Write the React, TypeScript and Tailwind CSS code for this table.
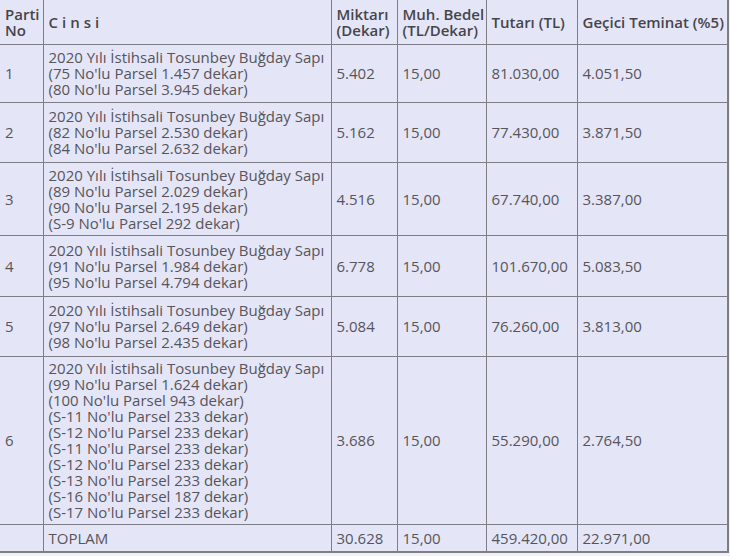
import React from 'react';

interface Row {
  no: string;
  lines: string[];
  miktar: string;
  bedel: string;
  tutar: string;
  teminat: string;
  h: string;
}

const head = '2020 Yılı İstihsali Tosunbey Buğday Sapı';

const rows: Row[] = [
  { no: '1', h: 'h-[58px]', lines: [head, "(75 No'lu Parsel 1.457 dekar)", "(80 No'lu Parsel 3.945 dekar)"], miktar: '5.402', bedel: '15,00', tutar: '81.030,00', teminat: '4.051,50' },
  { no: '2', h: 'h-[60px]', lines: [head, "(82 No'lu Parsel 2.530 dekar)", "(84 No'lu Parsel 2.632 dekar)"], miktar: '5.162', bedel: '15,00', tutar: '77.430,00', teminat: '3.871,50' },
  { no: '3', h: 'h-[73px]', lines: [head, "(89 No'lu Parsel 2.029 dekar)", "(90 No'lu Parsel 2.195 dekar)", "(S-9 No'lu Parsel 292 dekar)"], miktar: '4.516', bedel: '15,00', tutar: '67.740,00', teminat: '3.387,00' },
  { no: '4', h: 'h-[61px]', lines: [head, "(91 No'lu Parsel 1.984 dekar)", "(95 No'lu Parsel 4.794 dekar)"], miktar: '6.778', bedel: '15,00', tutar: '101.670,00', teminat: '5.083,50' },
  { no: '5', h: 'h-[60px]', lines: [head, "(97 No'lu Parsel 2.649 dekar)", "(98 No'lu Parsel 2.435 dekar)"], miktar: '5.084', bedel: '15,00', tutar: '76.260,00', teminat: '3.813,00' },
  {
    no: '6',
    h: 'h-[168px]',
    lines: [
      head,
      "(99 No'lu Parsel 1.624 dekar)",
      "(100 No'lu Parsel 943 dekar)",
      "(S-11 No'lu Parsel 233 dekar)",
      "(S-12 No'lu Parsel 233 dekar)",
      "(S-11 No'lu Parsel 233 dekar)",
      "(S-12 No'lu Parsel 233 dekar)",
      "(S-13 No'lu Parsel 233 dekar)",
      "(S-16 No'lu Parsel 187 dekar)",
      "(S-17 No'lu Parsel 233 dekar)",
    ],
    miktar: '3.686', bedel: '15,00', tutar: '55.290,00', teminat: '2.764,50',
  },
];

const td = 'border border-[#7d7d86] px-[5px] py-[3px] align-middle';
const th = 'border border-[#7d7d86] px-[5px] py-[5px] align-middle text-left font-semibold text-[#454549] text-[15px]';

export default function App() {
  return (
    <div className="min-h-[556px] w-[730px] bg-[#f1f1f3] font-['Open_Sans','Liberation_Sans',sans-serif] text-[15px] leading-[16px] text-[#55555a]">
      <table className="w-[729px] border-collapse bg-[#e5e5f8] border-t-0 border-l-0 border-r-2 border-b-2 border-[#7d7d86] table-fixed">
        <colgroup>
          <col className="w-[43px]" />
          <col className="w-[288px]" />
          <col className="w-[66px]" />
          <col className="w-[89px]" />
          <col className="w-[91px]" />
          <col />
        </colgroup>
        <thead>
          <tr className="h-[44px]">
            <th className={`${th} border-l-0 border-t-0`}>Parti<br />No</th>
            <th className={`${th} border-t-0 tracking-[4px]`}>Cinsi</th>
            <th className={`${th} border-t-0 whitespace-nowrap`}>Miktarı<br />(Dekar)</th>
            <th className={`${th} border-t-0 whitespace-nowrap`}>Muh. Bedel<br />(TL/Dekar)</th>
            <th className={`${th} border-t-0 whitespace-nowrap`}>Tutarı (TL)</th>
            <th className={`${th} border-t-0 border-r-0 whitespace-nowrap`}>Geçici Teminat (%5)</th>
          </tr>
        </thead>
        <tbody>
          {rows.map((r) => (
            <tr key={r.no} className={r.h}>
              <td className={`${td} border-l-0`}>{r.no}</td>
              <td className={td}>
                {r.lines.map((l, i) => (
                  <div key={i} className="whitespace-nowrap">{l}</div>
                ))}
              </td>
              <td className={td}>{r.miktar}</td>
              <td className={td}>{r.bedel}</td>
              <td className={`${td} whitespace-nowrap`}>{r.tutar}</td>
              <td className={`${td} border-r-0`}>{r.teminat}</td>
            </tr>
          ))}
          <tr className="h-[28px]">
            <td className={`${td} border-l-0 border-b-0`}></td>
            <td className={`${td} border-b-0`}>TOPLAM</td>
            <td className={`${td} border-b-0`}>30.628</td>
            <td className={`${td} border-b-0`}>15,00</td>
            <td className={`${td} border-b-0 whitespace-nowrap`}>459.420,00</td>
            <td className={`${td} border-b-0 border-r-0`}>22.971,00</td>
          </tr>
        </tbody>
      </table>
    </div>
  );
}
